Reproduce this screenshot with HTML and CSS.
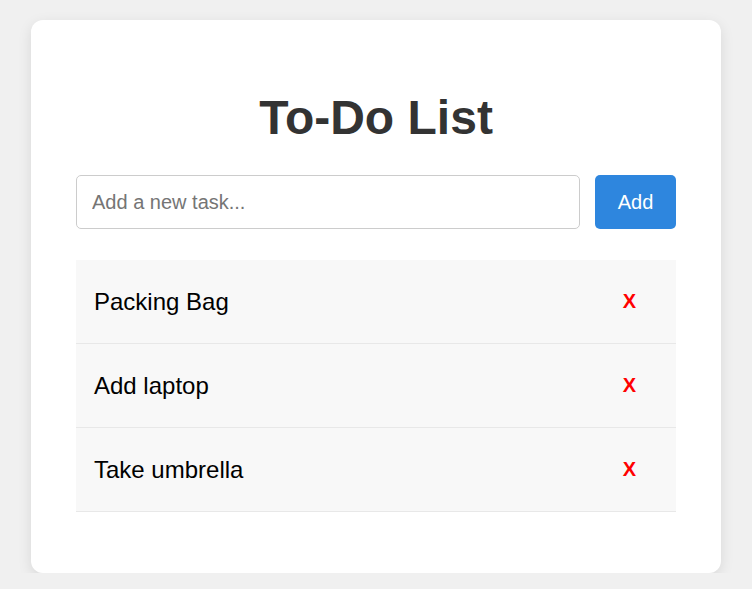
FILE: index.html
```html
<!DOCTYPE html>
<html lang="en">
<head>
<meta charset="utf-8">
<title>To-Do List</title>
<link rel="stylesheet" href="styles.css">
</head>
<body>
<div class="card">
  <h1 class="title">To-Do List</h1>
  <div class="entry">
    <input class="task-input" type="text" placeholder="Add a new task...">
    <button class="add-btn">Add</button>
  </div>
  <ul class="list">
    <li class="item"><span class="item-text">Packing Bag</span><button class="del-btn">X</button></li>
    <li class="item"><span class="item-text">Add laptop</span><button class="del-btn">X</button></li>
    <li class="item"><span class="item-text">Take umbrella</span><button class="del-btn">X</button></li>
  </ul>
</div>
</body>
</html>
```

FILE: styles.css
```css
html, body {
  margin: 0;
  padding: 0;
}
body {
  background: #f0f0f0;
  font-family: "Liberation Sans", Arial, sans-serif;
  padding-top: 20px;
}
.card {
  width: 600px;
  margin: 0 auto;
  background: #fff;
  border-radius: 12px;
  padding: 40px 45px;
  box-shadow: 0 4px 14px rgba(0,0,0,0.1);
}
.title {
  margin: 30px 0 30px;
  text-align: center;
  font-size: 48px;
  font-weight: bold;
  color: #333;
  line-height: normal;
}
.entry {
  display: flex;
  gap: 15px;
  margin-bottom: 31px;
}
.task-input {
  flex: 1;
  height: 54px;
  box-sizing: border-box;
  border: 1px solid #ccc;
  border-radius: 5px;
  padding: 0 15px;
  font-family: inherit;
  font-size: 20px;
  color: #333;
  outline: none;
}
.task-input::placeholder {
  color: #757575;
}
.add-btn {
  width: 81px;
  height: 54px;
  border: none;
  border-radius: 5px;
  background: #2e86de;
  color: #fff;
  font-family: inherit;
  font-size: 20px;
  cursor: pointer;
}
.list {
  list-style: none;
  margin: 0 0 21px;
  padding: 0;
}
.item {
  display: flex;
  align-items: center;
  justify-content: space-between;
  background: #f8f8f8;
  border-bottom: 1px solid #e8e8e8;
  padding: 20px 18px;
  box-sizing: border-box;
  height: 84px;
}
.item-text {
  font-size: 24px;
  color: #000;
}
.del-btn {
  background: none;
  border: none;
  color: #f00;
  font-family: inherit;
  font-weight: bold;
  font-size: 20px;
  padding: 10px 22px;
  cursor: pointer;
}
```
